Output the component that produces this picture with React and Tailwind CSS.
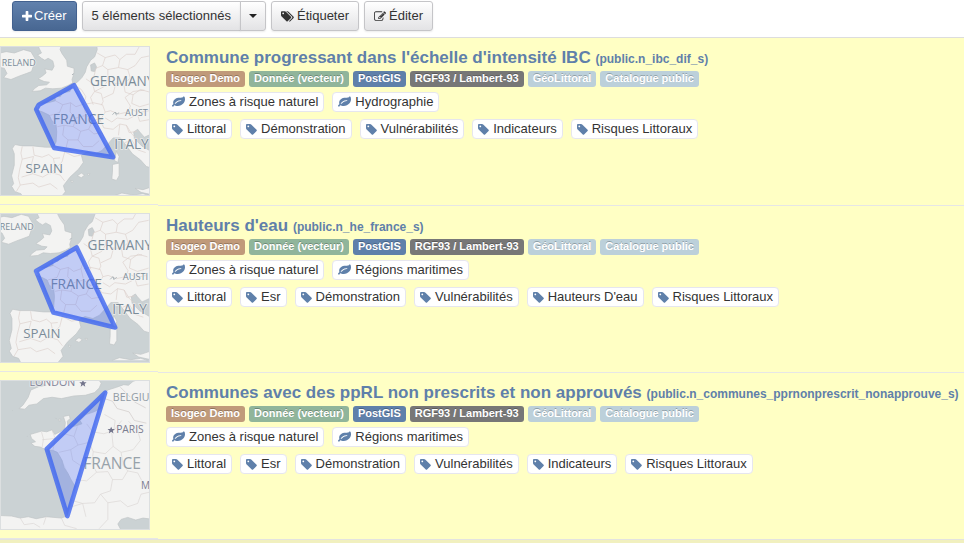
const ICONS = {
  plus: 'M1600 736v192q0 40-28 68t-68 28h-416v416q0 40-28 68t-68 28h-192q-40 0-68-28t-28-68v-416h-416q-40 0-68-28t-28-68v-192q0-40 28-68t68-28h416v-416q0-40 28-68t68-28h192q40 0 68 28t28 68v416h416q40 0 68 28t28 68z',
  tag: 'M448 448q0-53-37.5-90.5t-90.5-37.5-90.5 37.5-37.5 90.5 37.5 90.5 90.5 37.5 90.5-37.5 37.5-90.5zm1067 576q0 53-37 90l-491 492q-39 37-91 37-53 0-90-37l-715-716q-38-37-64.5-101t-26.5-117v-416q0-52 38-90t90-38h416q53 0 117 26.5t102 64.5l715 714q37 39 37 91z',
  tags: 'M448 448q0-53-37.5-90.5t-90.5-37.5-90.5 37.5-37.5 90.5 37.5 90.5 90.5 37.5 90.5-37.5 37.5-90.5zm1067 576q0 53-37 90l-491 492q-39 37-91 37-53 0-90-37l-715-716q-38-37-64.5-101t-26.5-117v-416q0-52 38-90t90-38h416q53 0 117 26.5t102 64.5l715 714q37 39 37 91zm384 0q0 53-37 90l-491 492q-39 37-91 37-36 0-59-14t-53-45l470-470q37-37 37-90 0-52-37-91l-715-714q-38-38-102-64.5t-117-26.5h224q53 0 117 26.5t102 64.5l715 714q37 39 37 91z',
  edit: 'M888 1184l116-116-152-152-116 116v56h96v96h56zm440-720q-16-16-33 1l-350 350q-17 17-1 33t33-1l350-350q17-17 1-33zm80 594v190q0 119-84.5 203.5t-203.5 84.5h-832q-119 0-203.5-84.5t-84.5-203.5v-832q0-119 84.5-203.5t203.5-84.5h832q63 0 117 25 15 7 18 23 3 17-9 29l-49 49q-14 14-32 8-23-6-45-6h-832q-66 0-113 47t-47 113v832q0 66 47 113t113 47h832q66 0 113-47t47-113v-126q0-13 9-22l64-64q15-15 35-7t20 29zm-96-738l288 288-672 672h-288v-288zm444 132l-92 92-288-288 92-92q28-28 68-28t68 28l152 152q28 28 28 68t-28 68z',
  leaf: 'M1280 704q0-26-19-45t-45-19q-172 0-318 49.5t-259.5 134-235.5 219.5q-19 21-19 45 0 26 19 45t45 19q24 0 45-19 27-24 74-71t67-66q137-124 268.5-176t313.5-52q26 0 45-19t19-45zm512-198q0 95-20 193-46 224-184.5 383t-357.5 268q-214 108-438 108-148 0-286-47-15-5-88-42t-96-37q-16 0-39.5 32t-45 70-52.5 70-60 32q-43 0-63.5-17.5t-45.5-59.5q-2-4-6-11t-5.5-10-3-9.5-1.5-13.5q0-35 31-73.5t68-65.5 68-56 31-48q0-4-14-38t-16-44q-9-51-9-104 0-115 43.5-220t119-184.5 170.5-139 204-95.5q55-18 145-25.5t179.5-9 178.5-6 163.5-24 113.5-56.5l29.5-29.5 29.5-28 27-20 36.5-16 43.5-4.5q39 0 70.5 46t47.5 112 24 124 8 96z',
}

const BOXES = {
  plus: '192 128 1408 1536',
  tag: '0 128 1536 1536',
  tags: '0 128 1920 1536',
  edit: '0 128 1792 1536',
  leaf: '0 128 1792 1536',
}

function Icon({ name, className }) {
  return (
    <svg viewBox={BOXES[name]} className={className} fill="currentColor" aria-hidden="true">
      <path d={ICONS[name]} />
    </svg>
  )
}

/* ---------- map thumbnails ---------- */

function Label({ x, y, size, children, fill = '#7b8c99' }) {
  return (
    <text x={x} y={y} fontSize={size} fill={fill} stroke="#f4f4f3" strokeOpacity="0.7" strokeWidth="5" paintOrder="stroke" fontWeight="500" fontFamily="'Open Sans', 'Noto Sans', sans-serif">
      {children}
    </text>
  )
}

function Europe() {
  return (
    <g strokeLinejoin="round">
      <g fill="#f3f3f2" stroke="#c0c4c6" strokeWidth="2">
        <path d="M-10 52L18 46 42 50 70 40 92 46 104 66 100 88 94 106 78 112 56 120 32 130 10 124 20 112 12 96-10 92z" />
        <path d="M122 20L116 34 124 50 112 56 124 66 134 72 144 66 158 74 162 90 156 102 134 98 138 110 126 120 114 128 132 136 148 138 140 146 116 148 102 158 96 166 120 164 136 156 158 158 184 156 204 148 218 140 216 130 222 112 222 96 202 90 200 72 186 52 180 40 186 20z" />
        <path d="M460 20L290 20 292 40 284 62 272 72 260 92 256 108 246 124 232 138 216 148 210 166 188 170 180 182 164 178 166 194 144 200 120 202 108 208 110 222 128 228 148 238 154 252 168 266 170 288 168 318 160 334 136 334 98 330 66 330 44 326 36 338 42 354 42 388 34 420 40 444 34 452 44 468 62 474 70 490 178 490 196 468 190 450 210 424 236 400 250 380 244 358 262 348 286 354 306 344 324 324 340 306 362 306 380 330 398 354 422 372 440 392 460 398z" />
        <path d="M460 292L434 304 420 288 414 280 402 288 404 308 426 330 460 350z" fill="#cbd2d4" />
        <path d="M350 346L358 362 354 380 344 374zM338 386L358 382 358 420 350 434 336 430 338 406zM406 458L430 462 460 452 460 478 424 470z" />
        <path d="M232 420l12-8 10 6-10 8zM212 434l8 2-4 6zM262 414l8 0-4 6z" />
        <path d="M272 86l12-6 6 12-6 14-10-2z" fill="#c9cfd1" />
      </g>
      <path d="M344 480l22-8 34 6 30-4 20 6" fill="#f3f3f2" stroke="#c0c4c6" strokeWidth="2" />
      <g fill="none" stroke="#dcd0cc" strokeWidth="2">
        <path d="M66 332L62 352 66 370 58 402 54 426 60 448 48 468M98 332l4 26 24 6 20-8 14 12 20-2M66 370l34-8M100 362l-8 30 6 22-34 10M98 414l30 10 24-14 28 8 14 18M60 448l38-6 18 12 34-10 22 16M160 368l6 30-16 18M194 348l-8 30-20 20M194 348l28 14 20-4" />
        <path d="M166 194l22 12 24-6 16 12 22-8 8-22-14-22-16-10M188 206l-10 24-28 8M212 200l-2 28 18 18-8 26-28-4-20 4M228 246l30-8 20 16 26-6 12-20-8-22-28-6-22 4M192 268l-4 30 16 14-6 24M220 272l22 14 24-6 16 14 24-4 8 20M242 286l-8 26-30 0M234 312l16 20 28 0 20-18M258 238l-8-34M278 254l-12 26M316 228l16-4 24 10 28-6 8-18-16-26 24-18 34-4" />
        <path d="M258 128l20 14 6 24 20 6 6 24-6 12M284 166l-12 18 8 22M292 50l24 14-8 24-20 8-8 34M316 64l30-8 14 14-4 24 28 6 22-12 18-24 30-6M360 70l20-16 26 0 12-22M308 88l16 12 32-6M324 100l0 32-12 20-28 14M384 100l8 26-20 16 4 26 24 8 22-16 28 8M324 132l24 10 24 0M348 142l-8 30-30 14M400 176l-4 26 24 10 34-10M392 218l24 12 32-6M316 246l20 12 16-12 32 4 20-10M300 250l12 26 28 4 20-16 20 4 8 22 24-4M412 232l8 24 34-6M360 264l-4 34M380 268l16 26 26 24M376 320l20-8 18 30 24 8" />
      </g>
      <path d="M338 236l8-8 6 6 6-4M222 112l-6 4M346 228l4 10" fill="none" stroke="#aeb6ba" strokeWidth="3" />
    </g>
  )
}

function MapOne() {
  return (
    <svg viewBox="2 32 446 446" className="block size-full" role="img" aria-label="Emprise : France">
      <Europe />
      <Label x="4" y="88" size="27">RELAND</Label>
      <Label x="270" y="149" size="41">GERMANY</Label>
      <Label x="158" y="264" size="42">FRANCE</Label>
      <Label x="376" y="239" size="28">AUST</Label>
      <Label x="343" y="339" size="41">ITALY</Label>
      <Label x="76" y="412" size="40">SPAIN</Label>
      <path d="M222 147L340 364 162 336 108 220 116 206z" fill="#3f62ff" fillOpacity="0.27" stroke="#4168f0" strokeOpacity="0.82" strokeWidth="14" strokeLinejoin="round" />
    </svg>
  )
}

function MapTwo() {
  return (
    <svg viewBox="2 42 446 446" className="block size-full" role="img" aria-label="Emprise : France et Corse">
      <g transform="translate(-7 3)">
        <Europe />
      </g>
      <Label x="-2" y="91" size="27">RELAND</Label>
      <Label x="263" y="151" size="41">GERMANY</Label>
      <Label x="151" y="267" size="42">FRANCE</Label>
      <Label x="369" y="242" size="28">AUSTI</Label>
      <Label x="337" y="342" size="41">ITALY</Label>
      <Label x="69" y="415" size="40">SPAIN</Label>
      <path d="M230 143L346 384 160 339 108 214z" fill="#3f62ff" fillOpacity="0.27" stroke="#4168f0" strokeOpacity="0.82" strokeWidth="14" strokeLinejoin="round" />
    </svg>
  )
}

function MapThree() {
  return (
    <svg viewBox="2 39 446 446" className="block size-full" role="img" aria-label="Emprise : littoral atlantique">
      <g fill="#f3f3f2" stroke="#c0c4c6" strokeWidth="2" strokeLinejoin="round">
        <path d="M110 20L108 34 124 44 138 52 116 56 92 66 84 88 68 112 56 122 74 124 86 112 110 108 130 92 156 88 184 92 222 84 256 82 284 74 298 60 304 46 286 20z" />
        <path d="M460 20L400 40 386 52 372 50 350 58 324 66 314 76 306 108 304 122 282 132 258 140 240 158 246 168 228 174 204 180 202 160 210 152 208 142 190 146 196 164 194 182 180 192 164 200 156 186 140 192 124 190 104 196 90 200 94 212 106 222 92 226 104 236 120 238 138 246 158 248 172 254 186 278 192 300 204 318 212 334 226 358 214 378 208 420 200 446 184 452 138 448 108 454 84 448 60 452 34 446-10 444-10 500 370 500 354 470 364 456 384 450 408 458 430 452 460 456z" />
        <path d="M176 154l6 0 0 5-6 0zM166 150l4 4M36 128l2 0M80 206l2 0" />
      </g>
      <path d="M212 334l-4 30 12 8-4 40-14 36-34-100 18-70z" fill="#c6cdd0" opacity="0.3" />
      <g fill="none" stroke="#dad6d4" strokeWidth="2" strokeLinejoin="round">
        <path d="M124 192l6 22-4 24M156 188l10 26-8 34M126 216l40-4M166 214l26-16 30 8 12 26-22 14-36 8M222 206l10-30M234 232l34-8 10-32-18-24M278 192l34 6 30-10 4-30-32-18M212 246l6 32 24 16 34-6 14 26-30 26-34-4M276 288l4-36-12-28M280 252l36 6 24-22-4-40M290 314l34-2 14 24-6 34-30 10-18 26-36 2-36-10M340 236l24 18 36-8 22-28-8-30M302 380l22 26 38-6 22 18 30-10 10-28 26-6M338 336l30 0 16-26 30 6 16 30M248 408l10 40M324 406l0 50-26 28M208 420l40-12M364 254l6 40 14 16M342 188l24-30M386 160l28 28M60 452l12 20 28-4 20 12M138 448l-8 24M184 452l10 22 36 10" />
        <path d="M314 92l24 8 14 22 36 10 16 26 36 8M404 102l34 18M362 58l30 30" stroke="#cfc9c7" />
      </g>
      <Label x="88" y="55" size="32" fill="#83849a">LONDON</Label>
      <Label x="339" y="100" size="32" fill="#8f9aa3">BELGIU</Label>
      <Label x="349" y="197" size="31" fill="#7b7d90">PARIS</Label>
      <Label x="250" y="305" size="47" fill="#98a2aa">FRANCE</Label>
      <Label x="424" y="366" size="30" fill="#7b7d90">M</Label>
      <g fill="#73758c">
        <path d="M249 35l3 8 8 0-6 5 2 8-7-5-7 5 2-8-6-5 8 0z" />
        <path d="M334 177l3 7 8 0-6 5 2 8-7-5-7 5 2-8-6-5 8 0z" />
      </g>
      <path d="M316 74L202 446 140 244z" fill="#3f62ff" fillOpacity="0.27" stroke="#4168f0" strokeOpacity="0.82" strokeWidth="14" strokeLinejoin="round" />
    </svg>
  )
}

/* ---------- catalogue rows ---------- */

const BADGES = [
  ['Isogeo Demo', 'bg-[#c09a7a]'],
  ['Donnée (vecteur)', 'bg-[#90b59b]'],
  ['PostGIS', 'bg-[#5f80aa]'],
  ['RGF93 / Lambert-93', 'bg-[#777777]'],
  ['GéoLittoral', 'bg-[#bcd0da]'],
  ['Catalogue public', 'bg-[#bcd0da]'],
]

const RESOURCES = [
  {
    title: "Commune progressant dans l'échelle d'intensité IBC",
    name: 'public.n_ibc_dif_s',
    Map: MapOne,
    themes: ['Zones à risque naturel', 'Hydrographie'],
    tags: ['Littoral', 'Démonstration', 'Vulnérabilités', 'Indicateurs', 'Risques Littoraux'],
  },
  {
    title: "Hauteurs d'eau",
    name: 'public.n_he_france_s',
    Map: MapTwo,
    themes: ['Zones à risque naturel', 'Régions maritimes'],
    tags: ['Littoral', 'Esr', 'Démonstration', 'Vulnérabilités', "Hauteurs D'eau", 'Risques Littoraux'],
  },
  {
    title: 'Communes avec des ppRL non prescrits et non approuvés',
    name: 'public.n_communes_pprnonprescrit_nonapprouve_s',
    Map: MapThree,
    themes: ['Zones à risque naturel', 'Régions maritimes'],
    tags: ['Littoral', 'Esr', 'Démonstration', 'Vulnérabilités', 'Indicateurs', 'Risques Littoraux'],
  },
]

function Chips({ icon, items }) {
  return (
    <ul className="flex flex-wrap gap-x-2 gap-y-[7px]">
      {items.map((item) => (
        <li key={item} className="flex h-5 items-center gap-1 rounded border border-[#e6e6ee] bg-white px-[5px] text-[13px] leading-[18px] text-[#333]">
          <Icon name={icon} className={icon === 'leaf' ? 'h-3 w-[13px] text-[#5f80aa]' : 'h-[11px] w-[11px] text-[#5f80aa]'} />
          {item}
        </li>
      ))}
    </ul>
  )
}

function Resource({ title, name, Map, themes, tags }) {
  return (
    <li className="group flex min-h-[167px] bg-[#ffffc4]">
      <div className="w-[158px] shrink-0 border-b border-[#e6e6e6] pt-2">
        <div className="size-[150px] overflow-hidden border border-[#dcdfe0] bg-[#cbd2d4]">
          <Map />
        </div>
      </div>
      <div className="min-w-0 flex-1 border-t border-[#e6e6e6] pt-[10px] pl-2 group-first:border-t-0">
        <h2 className="text-[17px] leading-5 font-bold whitespace-nowrap">
          <a href="#" className="text-[#5f80aa]">
            {title} <small className="text-[12px]">({name})</small>
          </a>
        </h2>
        <ul className="mt-[2px] mb-[5px] flex flex-wrap gap-1">
          {BADGES.map(([text, color]) => (
            <li key={text} className={`h-4 rounded-[3px] px-[5px] text-[11px] leading-[14px] font-bold text-white text-shadow-[0_-1px_0_rgba(0,0,0,0.25)] ${color}`}>
              {text}
            </li>
          ))}
        </ul>
        <div className="flex flex-col gap-[7px]">
          <Chips icon="leaf" items={themes} />
          <Chips icon="tag" items={tags} />
        </div>
      </div>
    </li>
  )
}

const BUTTON = 'flex h-[30px] items-center gap-[3px] border border-[#c5c5c8] bg-linear-to-b from-white to-[#e3e3e5] text-[13px] leading-5 text-[#333] shadow-[0_1px_2px_rgba(0,0,0,0.08)]'

export default function App() {
  return (
    <main className="min-h-screen bg-[#f1f0bf] font-['Liberation_Sans',Arial,sans-serif]">
      <div className="flex h-[38px] items-start gap-[5px] border-b border-[#dddddd] bg-white pt-px pl-3">
        <button type="button" className="flex h-[30px] items-center gap-[2px] rounded-[3px] border border-[#43618f] bg-linear-to-b from-[#6181ad] to-[#486792] px-[9px] text-[13px] leading-5 text-white shadow-[0_1px_2px_rgba(0,0,0,0.08)]">
          <Icon name="plus" className="h-[11px] w-[10px]" />
          Créer
        </button>
        <div className="flex">
          <button type="button" className={`${BUTTON} rounded-l-[3px] px-[9px]`}>
            5 éléments sélectionnés
          </button>
          <button type="button" aria-label="Options de sélection" className={`${BUTTON} -ml-px rounded-r-[3px] px-2`}>
            <svg viewBox="0 0 8 4" className="h-1 w-2" fill="#222" aria-hidden="true">
              <path d="M0 0h8L4 4z" />
            </svg>
          </button>
        </div>
        <button type="button" className={`${BUTTON} rounded-[3px] px-[9px]`}>
          <Icon name="tags" className="h-[11px] w-[13px]" />
          Étiqueter
        </button>
        <button type="button" className={`${BUTTON} rounded-[3px] px-[9px]`}>
          <Icon name="edit" className="h-[11px] w-[12px]" />
          Éditer
        </button>
      </div>
      <ul className="border-b border-[#e3e3e0]">
        {RESOURCES.map((resource) => (
          <Resource key={resource.name} {...resource} />
        ))}
      </ul>
    </main>
  )
}
